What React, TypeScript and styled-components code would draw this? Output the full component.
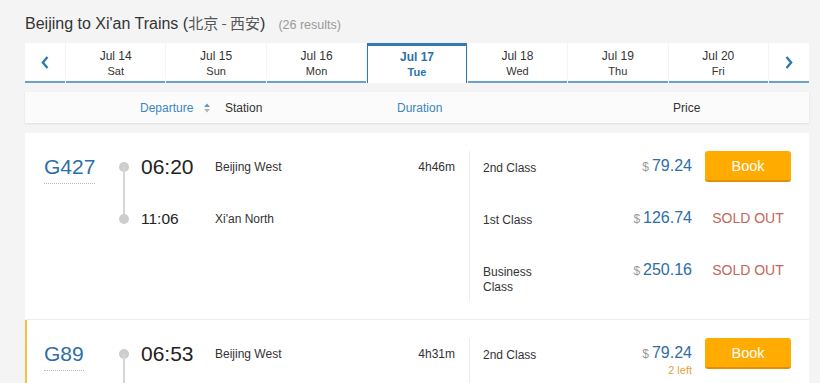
import React from "react";
import styled, { createGlobalStyle, css } from "styled-components";

const GlobalStyle = createGlobalStyle`
  html, body {
    margin: 0;
    padding: 0;
    background: #f4f4f4;
    overflow: hidden;
  }
  body {
    font-family: "Liberation Sans", Arial, "Noto Sans CJK SC", sans-serif;
    color: #333;
  }
`;

const Page = styled.div`
  width: 784px;
  padding: 13px 0 0 25px;
`;

const Title = styled.h1`
  margin: 0;
  font-size: 16px;
  line-height: 20px;
  font-weight: normal;
  color: #333;
  display: flex;
  align-items: baseline;
`;

const Cjk = styled.span`
  font-family: "Noto Sans CJK SC", sans-serif;
  font-size: 15px;
  color: #555;
`;

const Results = styled.span`
  margin-left: 13px;
  font-size: 12.5px;
  color: #999;
`;

const Tabs = styled.div`
  margin-top: 8px;
  display: grid;
  grid-template-columns: 40px repeat(7, 1fr) 40px;
  column-gap: 1px;
  height: 40px;
`;

const Tab = styled.div<{ $active?: boolean }>`
  box-sizing: border-box;
  background: #fff;
  border-bottom: 2px solid #6ba3c7;
  display: flex;
  flex-direction: column;
  align-items: center;
  padding-top: 6px;
  color: #333;
  ${(p) =>
    p.$active &&
    css`
      border: 1px solid #2f7cb5;
      border-top: 3px solid #2f7cb5;
      border-bottom: none;
      padding-top: 4px;
      color: #2d72aa;
      font-weight: bold;
    `}
`;

const ArrowTab = styled(Tab)`
  justify-content: center;
  padding-top: 0;
`;

const TabDate = styled.span`
  font-size: 12px;
  line-height: 15px;
`;

const TabDay = styled.span`
  font-size: 11px;
  line-height: 14px;
`;

const Header = styled.div`
  margin-top: 9px;
  height: 31px;
  background: #fbfbfb;
  box-shadow: 0 1px 2px rgba(0, 0, 0, 0.09);
  display: flex;
  align-items: center;
  padding-left: 115px;
  font-size: 12px;
`;

const HeadCell = styled.div<{ $w?: number; $blue?: boolean }>`
  width: ${(p) => (p.$w ? `${p.$w}px` : "auto")};
  color: ${(p) => (p.$blue ? "#3a86bf" : "#333")};
  display: flex;
  align-items: center;
`;

const SortIcon = styled.svg`
  margin-left: 11px;
`;

const List = styled.div`
  margin-top: 10px;
`;

const Card = styled.div<{ $highlight?: boolean }>`
  background: #fff;
  display: flex;
  padding: 18px 0 18px;
  & + & {
    border-top: 1px solid #eee;
  }
  ${(p) =>
    p.$highlight &&
    css`
      box-shadow: inset 2px 0 0 #f3c146;
    `}
`;

const Journey = styled.div`
  width: 444px;
  display: flex;
  padding-left: 19px;
  box-sizing: border-box;
`;

const TrainCol = styled.div`
  width: 75px;
`;

const TrainNo = styled.span`
  display: inline-block;
  font-size: 21px;
  line-height: 32px;
  color: #2d6ea5;
  border-bottom: 1px dotted #bbb;
`;

const Stops = styled.div`
  flex: 1;
`;

const StopRow = styled.div`
  display: flex;
  align-items: flex-start;
  height: 52px;
`;

const DotCell = styled.div<{ $line?: boolean }>`
  position: relative;
  width: 10px;
  ${(p) =>
    p.$line &&
    css`
      &::after {
        content: "";
        position: absolute;
        left: 4px;
        top: 16px;
        width: 2px;
        height: 52px;
        background: #d6d6d6;
      }
    `}
`;

const Dot = styled.div`
  width: 10px;
  height: 10px;
  margin-top: 11px;
  border-radius: 50%;
  background: #cdcdcd;
`;

const Time = styled.div<{ $big?: boolean }>`
  margin-left: 12px;
  width: 74px;
  font-size: ${(p) => (p.$big ? "21px" : "15.5px")};
  line-height: 32px;
  color: #222;
`;

const Station = styled.div`
  flex: 1;
  font-size: 12px;
  line-height: 32px;
`;

const Duration = styled.div`
  font-size: 12px;
  line-height: 32px;
  padding-right: 14px;
`;

const Fares = styled.div`
  flex: 1;
  border-left: 1px solid #ececec;
  padding: 0 18px 0 13px;
`;

const FareRow = styled.div`
  display: flex;
  align-items: flex-start;
  min-height: 52px;
  &:last-child {
    min-height: 46px;
  }
`;

const ClassName = styled.div`
  width: 70px;
  font-size: 12px;
  line-height: 15px;
  padding-top: 10px;
`;

const PriceCol = styled.div`
  flex: 1;
  padding-top: 5px;
  display: flex;
  flex-direction: column;
  align-items: flex-end;
`;

const Amount = styled.div`
  font-size: 16px;
  line-height: 20px;
  color: #2d6ea5;
`;

const Currency = styled.span`
  font-size: 12px;
  color: #999;
  margin-right: 3px;
`;

const Left = styled.div`
  font-size: 11px;
  line-height: 13px;
  color: #e2a43d;
`;

const Action = styled.div`
  width: 86px;
  margin-left: 13px;
`;

const BookButton = styled.button`
  width: 86px;
  height: 31px;
  box-sizing: border-box;
  background: #ffab00;
  border: none;
  border-bottom: 2px solid #e48f0c;
  border-radius: 3px;
  color: #fff;
  font-family: "Liberation Sans", Arial, sans-serif;
  font-size: 14.5px;
  padding: 0;
  cursor: pointer;
`;

const SoldOut = styled.div`
  font-size: 14px;
  line-height: 20px;
  padding-top: 5px;
  text-align: center;
  color: #c4665b;
`;

const Chevron = ({ dir }: { dir: "left" | "right" }) => (
  <svg width="8" height="13" viewBox="0 0 8 13">
    <path
      d={dir === "left" ? "M6.5 1 L1.8 6.5 L6.5 12" : "M1.5 1 L6.2 6.5 L1.5 12"}
      fill="none"
      stroke="#2a78b0"
      strokeWidth="2.3"
    />
  </svg>
);

type Fare = { cls: string; price: string; status: "book" | "sold"; left?: string };
type Train = {
  no: string;
  dep: string;
  arr: string;
  from: string;
  to: string;
  dur: string;
  fares: Fare[];
  highlight?: boolean;
};

const days = [
  ["Jul 14", "Sat"],
  ["Jul 15", "Sun"],
  ["Jul 16", "Mon"],
  ["Jul 17", "Tue"],
  ["Jul 18", "Wed"],
  ["Jul 19", "Thu"],
  ["Jul 20", "Fri"],
];

const trains: Train[] = [
  {
    no: "G427",
    dep: "06:20",
    arr: "11:06",
    from: "Beijing West",
    to: "Xi'an North",
    dur: "4h46m",
    fares: [
      { cls: "2nd Class", price: "79.24", status: "book" },
      { cls: "1st Class", price: "126.74", status: "sold" },
      { cls: "Business Class", price: "250.16", status: "sold" },
    ],
  },
  {
    no: "G89",
    dep: "06:53",
    arr: "11:24",
    from: "Beijing West",
    to: "Xi'an North",
    dur: "4h31m",
    highlight: true,
    fares: [
      { cls: "2nd Class", price: "79.24", status: "book", left: "2 left" },
      { cls: "1st Class", price: "126.74", status: "book" },
      { cls: "Business Class", price: "250.16", status: "book" },
    ],
  },
];

export default function App() {
  return (
    <>
      <GlobalStyle />
      <Page>
        <Title>
          Beijing to Xi'an Trains (<Cjk>北京 - 西安</Cjk>)<Results>(26 results)</Results>
        </Title>
        <Tabs>
          <ArrowTab>
            <Chevron dir="left" />
          </ArrowTab>
          {days.map(([d, w]) => (
            <Tab key={d} $active={d === "Jul 17"}>
              <TabDate>{d}</TabDate>
              <TabDay>{w}</TabDay>
            </Tab>
          ))}
          <ArrowTab>
            <Chevron dir="right" />
          </ArrowTab>
        </Tabs>
        <Header>
          <HeadCell $w={85} $blue>
            Departure
            <SortIcon width="6" height="10" viewBox="0 0 6 10">
              <path d="M0 4 L3 0.5 L6 4 Z" fill="#5b9bc8" />
              <path d="M0 6 L6 6 L3 9.5 Z" fill="#b5b5b5" />
            </SortIcon>
          </HeadCell>
          <HeadCell $w={172}>Station</HeadCell>
          <HeadCell $w={276} $blue>
            Duration
          </HeadCell>
          <HeadCell>Price</HeadCell>
        </Header>
        <List>
          {trains.map((t) => (
            <Card key={t.no} $highlight={t.highlight}>
              <Journey>
                <TrainCol>
                  <TrainNo>{t.no}</TrainNo>
                </TrainCol>
                <Stops>
                  <StopRow>
                    <DotCell $line>
                      <Dot />
                    </DotCell>
                    <Time $big>{t.dep}</Time>
                    <Station>{t.from}</Station>
                    <Duration>{t.dur}</Duration>
                  </StopRow>
                  <StopRow>
                    <DotCell>
                      <Dot />
                    </DotCell>
                    <Time>{t.arr}</Time>
                    <Station>{t.to}</Station>
                  </StopRow>
                </Stops>
              </Journey>
              <Fares>
                {t.fares.map((f) => (
                  <FareRow key={f.cls}>
                    <ClassName>{f.cls}</ClassName>
                    <PriceCol>
                      <Amount>
                        <Currency>$</Currency>
                        {f.price}
                      </Amount>
                      {f.left && <Left>{f.left}</Left>}
                    </PriceCol>
                    <Action>
                      {f.status === "book" ? <BookButton>Book</BookButton> : <SoldOut>SOLD OUT</SoldOut>}
                    </Action>
                  </FareRow>
                ))}
              </Fares>
            </Card>
          ))}
        </List>
      </Page>
    </>
  );
}
